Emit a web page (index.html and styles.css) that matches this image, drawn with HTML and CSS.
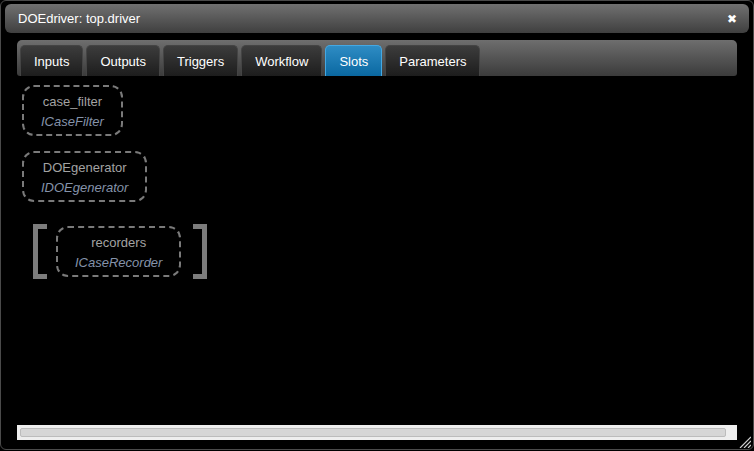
FILE: index.html
```html
<!DOCTYPE html>
<html>
<head>
<meta charset="utf-8">
<link rel="stylesheet" href="styles.css">
</head>
<body>
<div class="window">
  <div class="titlebar">
    <span class="title">DOEdriver: top.driver</span>
    <span class="close">✖</span>
  </div>
  <div class="body">
    <div class="tabbar">
      <div class="tab">Inputs</div>
      <div class="tab">Outputs</div>
      <div class="tab">Triggers</div>
      <div class="tab">Workflow</div>
      <div class="tab active">Slots</div>
      <div class="tab">Parameters</div>
    </div>
    <div class="panel">
      <div class="slot">
        <div class="name">case_filter</div>
        <div class="type">ICaseFilter</div>
      </div>
      <div class="slot">
        <div class="name">DOEgenerator</div>
        <div class="type">IDOEgenerator</div>
      </div>
      <div class="array">
        <div class="bracket left"></div>
        <div class="slot">
          <div class="name">recorders</div>
          <div class="type">ICaseRecorder</div>
        </div>
        <div class="bracket right"></div>
      </div>
    </div>
    <div class="hscroll"><div class="thumb"></div></div>
  </div>
  <svg class="grip" width="12" height="12" viewBox="0 0 12 12">
    <path d="M1 12 L12 1 M5 12 L12 5 M9 12 L12 9" stroke="#cfcfcf" stroke-width="1.2" fill="none"/>
  </svg>
</div>
</body>
</html>
```
FILE: styles.css
```css
html, body {
  margin: 0;
  padding: 0;
  background: #000;
}
body {
  font-family: "Liberation Sans", Arial, sans-serif;
  font-size: 13px;
  color: #fff;
}
.window {
  position: relative;
  box-sizing: border-box;
  width: 754px;
  height: 450px;
  border: 1px solid #4a4a4a;
  border-radius: 6px;
  background: #000;
  padding: 3px 4px 9px 4px;
  display: flex;
  flex-direction: column;
}
.titlebar {
  height: 29px;
  flex: none;
  box-sizing: border-box;
  border-radius: 6px;
  background: linear-gradient(#717171, #3f3f3f);
  display: flex;
  align-items: center;
  justify-content: space-between;
  padding: 0 12px 0 13px;
}
.title {
  color: #fff;
  font-size: 13px;
}
.close {
  font-family: "DejaVu Sans", sans-serif;
  font-size: 12px;
  font-weight: bold;
  color: #fff;
}
.body {
  flex: 1;
  display: flex;
  flex-direction: column;
  padding: 7px 12px 0 12px;
  min-height: 0;
}
.tabbar {
  flex: none;
  height: 36px;
  box-sizing: border-box;
  padding: 5px 3px 0 3px;
  border-radius: 5px 5px 3px 3px;
  background: linear-gradient(#6e6e6e, #3b3b3b);
  display: flex;
  gap: 3px;
}
.tab {
  box-sizing: border-box;
  height: 31px;
  line-height: 31px;
  padding: 0 13px;
  border-radius: 5px 5px 0 0;
  border: 1px solid #444;
  border-bottom: none;
  background: linear-gradient(#3c3c3c, #1d1d1d);
  color: #fff;
  font-size: 13px;
}
.tab.active {
  background: linear-gradient(#2e8cc4, #0a68a1);
  border-color: #45a8e2;
}
.panel {
  flex: 1;
  display: flex;
  flex-direction: column;
  align-items: flex-start;
  padding: 9px 0 0 5px;
}
.slot {
  border: 2px dashed #7a7a7a;
  border-radius: 12px;
  padding: 5px 17px 2px 17px;
  line-height: 20px;
  text-align: center;
  font-size: 13px;
  margin-bottom: 15px;
}
.name {
  color: #a3a3a3;
}
.type {
  color: #8593aa;
  font-style: italic;
}
.array {
  display: flex;
  align-items: center;
  margin: 7px 0 0 11px;
}
.array .slot {
  margin: 0 12px 0 9px;
}
.bracket {
  box-sizing: border-box;
  width: 14px;
  height: 55px;
  border: 5px solid #7c7c7c;
}
.bracket.left {
  border-right: none;
}
.bracket.right {
  border-left: none;
}
.hscroll {
  flex: none;
  height: 15px;
  box-sizing: border-box;
  background: #eeeeee;
  padding: 3px 11px 3px 3px;
}
.thumb {
  height: 9px;
  box-sizing: border-box;
  background: #d6d6d6;
  border: 1px solid #bcbcbc;
  border-radius: 2px;
}
.grip {
  position: absolute;
  right: 2px;
  bottom: 1px;
}
```
